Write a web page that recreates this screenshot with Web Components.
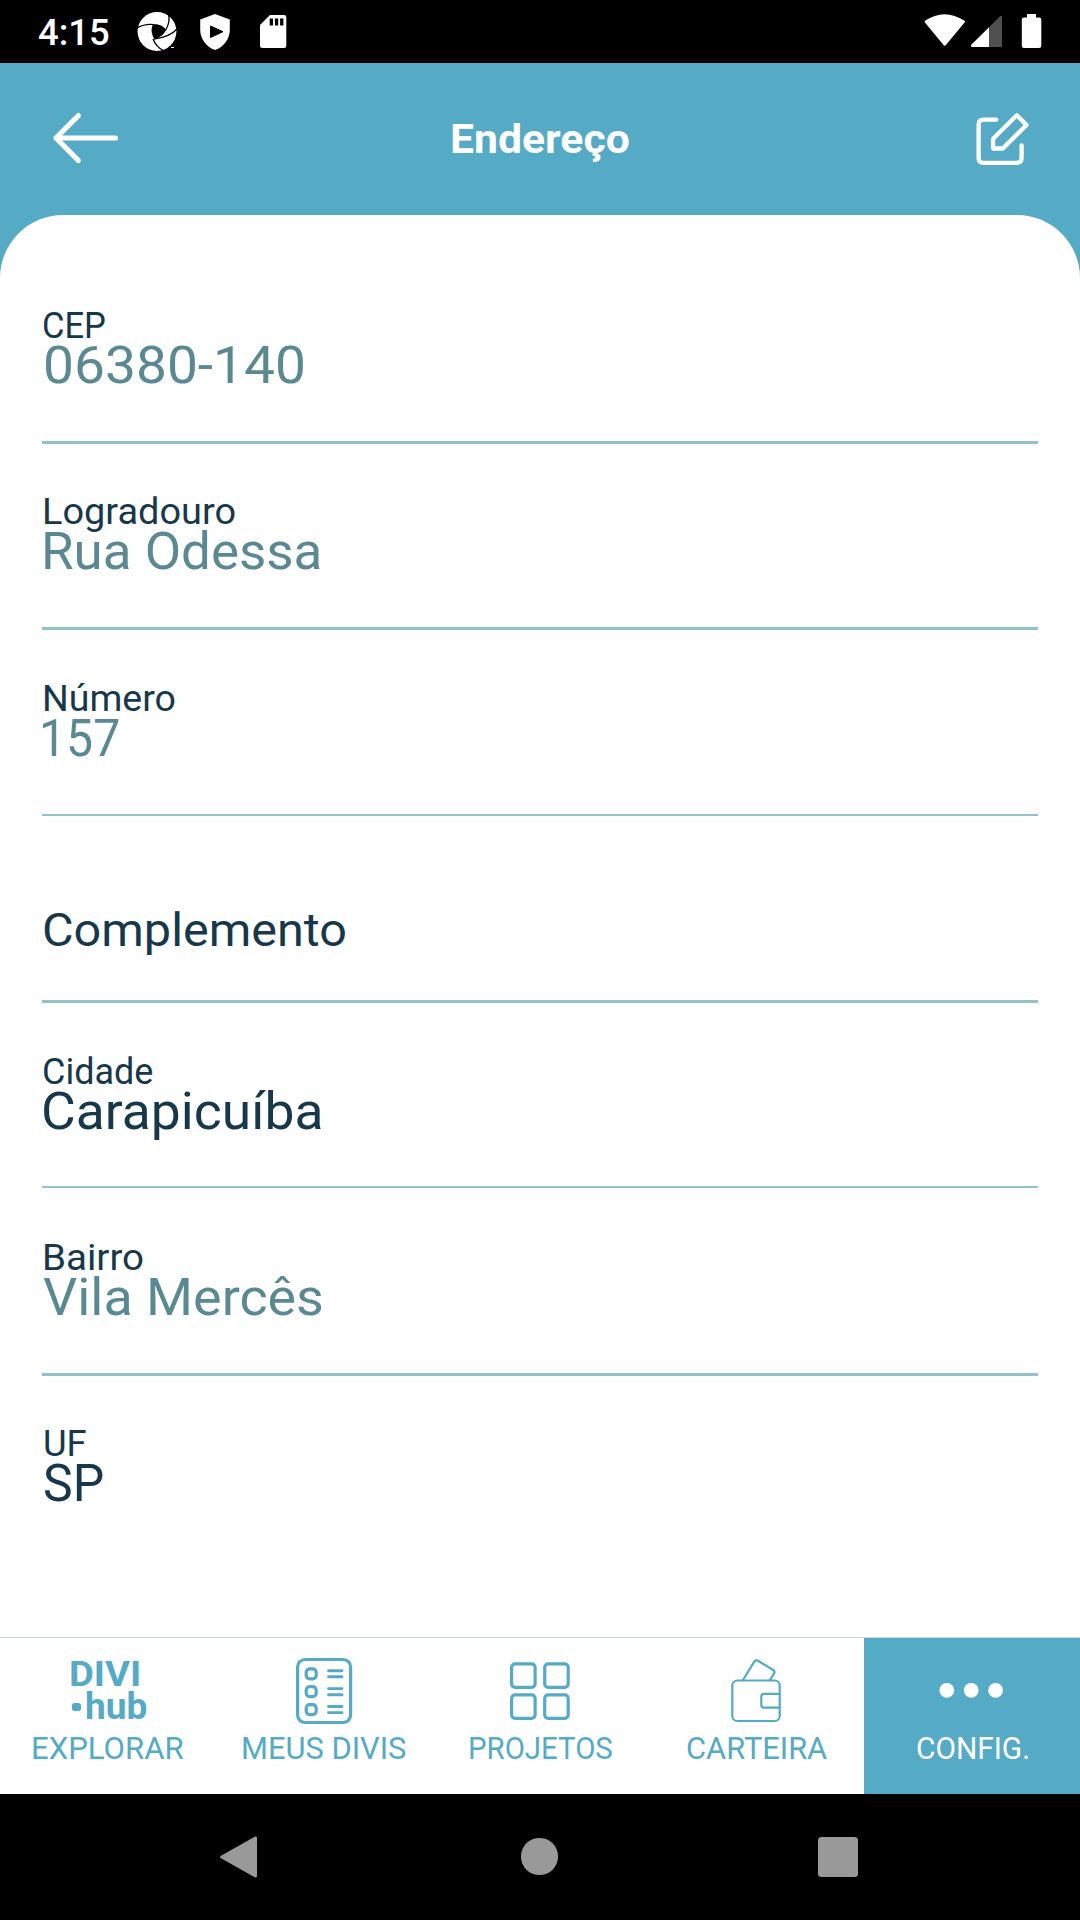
<!DOCTYPE html>
<html lang="pt-BR">
<head>
<meta charset="utf-8">
<title>Endereço</title>
<style>
html,body{margin:0;padding:0}
body{width:1080px;height:1920px;overflow:hidden;background:#fff;font-family:Roboto,sans-serif}
</style>
</head>
<body>
<address-screen></address-screen>
<script>
const define = (name, html, setup) => {
  const t = document.createElement('template');
  t.innerHTML = html;
  customElements.define(name, class extends HTMLElement {
    connectedCallback() {
      if (this.shadowRoot) return;
      const root = this.attachShadow({mode: 'open'});
      const c = t.content.cloneNode(true);
      if (setup) setup(this, c);
      root.append(c);
    }
  });
};

/* Single line of text whose ink starts at "inset" and spans "ink" pixels. */
const ctx = document.createElement('canvas').getContext('2d');
customElements.define('fit-text', class extends HTMLElement {
  connectedCallback() {
    if (this.shadowRoot) return;
    const a = n => parseFloat(this.getAttribute(n) || 0);
    const size = a('size'), line = a('line'), weight = a('weight') || 400, text = this.getAttribute('text');
    ctx.font = `${weight} ${size}px Roboto`;
    const m = ctx.measureText(text);
    const ink = m.actualBoundingBoxRight + m.actualBoundingBoxLeft;
    const scale = a('ink') / ink;
    const left = a('inset') + m.actualBoundingBoxLeft * scale;
    const root = this.attachShadow({mode: 'open'});
    root.innerHTML = `<style>:host{display:block;white-space:nowrap}
      span{display:block;width:max-content;font:${weight} ${size}px/${line}px Roboto,sans-serif;transform:scaleX(${scale.toFixed(4)});transform-origin:0 0;margin-left:${left.toFixed(2)}px}</style><span></span>`;
    root.querySelector('span').textContent = text;
  }
});

define('status-bar', `<style>
:host{display:flex;height:63px;background:#000;color:#fff;justify-content:space-between;flex:none}
.l{display:flex}.l fit-text{width:130px}svg{display:block;fill:#fff}
</style>
<div class="l"><fit-text text="4:15" size="36.5" line="66" weight="500" inset="37.500" ink="71"></fit-text>
<svg width="170" height="63" viewBox="130 0 170 63">
<circle cx="157" cy="31.5" r="19.4"/>
<path fill="#000" d="M153 24.5C158 23.5 164 26 166 30C163.5 35 160 37.5 154.5 39C151.500 35 150.500 29 153 24.500Z"/>
<path fill="none" stroke="#000" stroke-width="1.300" d="M137 28Q145 23.500 154 24.700M168.500 14Q170.500 22 165.500 30.500M177 29Q170 37 154 39M153 39Q156 47 164 51"/>
<path d="M171 47h3v1h-3z"/>
<path d="M215 14L229.800 19.500V30C229.800 39 223.500 47 215 50C206.500 47 200.200 39 200.200 30V19.500Z"/><path fill="#000" stroke="#000" stroke-linejoin="round" stroke-width="1" d="M210.500 26V37.500L223 31.700Z"/>
<path d="M270 15H284Q286.300 15 286.300 17.300V45.500Q286.300 48 284 48H262.500Q260 48 260 45.500V25Z"/>
<path fill="#000" d="M269.700 18.500h3.300v7h-3.300zM274.900 18.500h3.300v7h-3.300zM280.100 18.500h3.300v7h-3.300z"/></svg></div>
<svg width="170" height="63" viewBox="910 0 170 63">
<path stroke="#fff" stroke-linejoin="round" stroke-width="2" d="M925.500 21.700Q944.500 8.700 964 21.700L944.700 44.800Z"/>
<path fill="#505050" d="M1002 17.500Q1002 15.500 1000 16.300L989 27.300V47H1002Z"/><path d="M989 27.300L971.500 44.500Q970 47 972.500 47H989Z"/>
<path d="M1027 14h9v3.500h3Q1041.300 17.500 1041.300 19.500V45.700Q1041.300 48 1039 48h-15Q1021.800 48 1021.800 45.700V19.500Q1021.800 17.500 1024 17.500h3Z"/></svg>`);

define('app-header', `<style>
:host{display:flex;height:152px;background:#55aac5;color:#fff;flex:none}
svg{fill:none;stroke:#fff;stroke-linecap:round;stroke-linejoin:round}
.t{flex:1;padding-top:42px}
</style>
<svg width="200" height="152" viewBox="0 63 200 152" stroke-width="5.2"><path d="M115.500 138H56M78.300 115.600L56 138L78.300 160.400"/></svg>
<div class="t"><fit-text text="Endereço" size="40" line="70" weight="700" inset="252.500" ink="177"></fit-text></div>
<svg width="200" height="152" viewBox="880 63 200 152" stroke-width="4.300"><path d="M996.300 119.700H983.500Q978.600 119.700 978.600 124.600V158Q978.600 162.900 983.500 162.900H1016.500Q1021.600 162.900 1021.600 158V145.300"/><path d="M1016.800 115.200L1026.500 124.900L1002.800 148.500H993.100V138.800Z"/></svg>`);

define('form-field', `<style>
:host{display:block;box-sizing:border-box;height:var(--h);padding-top:var(--pad,50px);color:#17384a;border-bottom:var(--b,3px) solid #94c0ca}
:host([last]){border-bottom:0}
.v{color:var(--value,#17384a)}
</style>
<fit-text class="l" size="36.600" line="34"></fit-text><fit-text class="v" size="52" line="45" weight="430"></fit-text>`, (h, c) => {
  const g = n => h.getAttribute(n), l = c.querySelector('.l'), v = c.querySelector('.v');
  if (g('label')) { l.setAttribute('text', g('label')); l.setAttribute('inset', g('lx')); l.setAttribute('ink', g('lw')); }
  else l.remove();
  v.setAttribute('text', g('value')); v.setAttribute('inset', g('vx')); v.setAttribute('ink', g('vw'));
  if (g('size')) { v.setAttribute('size', g('size')); v.setAttribute('weight', 400); }
  if (h.hasAttribute('muted')) v.style.setProperty('--value', '#5a8992');
  h.style.setProperty('--h', g('h') + 'px');
  if (g('b')) h.style.setProperty('--b', g('b') + 'px');
  if (g('pad')) h.style.setProperty('--pad', g('pad') + 'px');
});

define('address-form', `<style>
:host{display:block;flex:1;background:linear-gradient(#55aac5 100px,#fff 100px);min-height:0}
.card{box-sizing:border-box;height:100%;background:#fff;border-radius:63px 63px 0 0;padding:42px 42px 0}
</style><div class="card"><slot></slot></div>`);

define('nav-item', `<style>
:host{display:flex;flex-direction:column;width:216px;height:156px;color:#55aac5}
:host([active]){background:#55aac5;color:#fff}
.i{height:92px}.i ::slotted(svg){display:block}
</style><div class="i"><slot></slot></div><fit-text size="31" line="38"></fit-text>`, (h, c) => {
  const t = c.querySelector('fit-text');
  for (const k of ['text', 'inset', 'ink']) t.setAttribute(k, h.getAttribute(k));
});

define('divi-logo', `<style>
:host{display:block;box-sizing:border-box;height:92px;padding-top:18px;color:#55aac5}
.r{display:flex;align-items:center;padding-left:72px}i{width:8.500px;height:8.500px;border-radius:2.800px;background:currentColor;margin-top:-1px}
</style><fit-text text="DIVI" size="35.400" line="36" weight="700" inset="71.500" ink="67.500"></fit-text>
<div class="r"><i></i><fit-text text="hub" size="36" line="31" weight="700" inset="5.500" ink="61"></fit-text></div>`);

define('tab-bar', `<style>:host{display:flex;border-top:1px solid #cbd8db;height:156px;flex:none;background:#fff}svg{display:block;fill:none;stroke:#55aac5;stroke-linecap:round;stroke-linejoin:round}</style>
<nav-item text="EXPLORAR" inset="33" ink="150.500"><divi-logo></divi-logo></nav-item>
<nav-item text="MEUS DIVIS" inset="27" ink="163"><svg width="216" height="92" viewBox="216 1638 216 92" stroke-width="3.200"><rect x="297.600" y="1659.500" width="53" height="63" rx="7.500"/><g><rect x="306.200" y="1668.800" width="10" height="10" rx="3.500"/><rect x="306.200" y="1686.700" width="10" height="10" rx="3.500"/><rect x="306.200" y="1704.600" width="10" height="10" rx="3.500"/></g><path stroke-width="2.900" d="M328.500 1670.700H342M328.500 1676.800H342M328.500 1688.600H342M328.500 1694.700H342M328.500 1706.500H342M328.500 1712.600H342"/></svg></nav-item>
<nav-item text="PROJETOS" inset="37.500" ink="142.500"><svg width="216" height="92" viewBox="432 1638 216 92" stroke-width="3.200"><rect x="511.600" y="1663.800" width="23.500" height="23.500" rx="3.500"/><rect x="544.700" y="1663.800" width="23.500" height="23.500" rx="3.500"/><rect x="511.600" y="1694.800" width="23.500" height="23.500" rx="3.500"/><rect x="544.700" y="1694.800" width="23.500" height="23.500" rx="3.500"/></svg></nav-item>
<nav-item text="CARTEIRA" inset="38.500" ink="140"><svg width="216" height="92" viewBox="648 1638 216 92" stroke-width="2.200"><rect x="732.300" y="1680.500" width="47.400" height="40.500" rx="5"/><path d="M743 1680L754.600 1661.200Q756 1659.600 758 1660.800L773.300 1670Q775.300 1671.500 774.300 1673.200L770 1680M779.500 1693.800H764Q761.300 1693.800 761.300 1696.500V1705Q761.300 1707.700 764 1707.700H779.500"/></svg></nav-item>
<nav-item active text="CONFIG." inset="53" ink="111"><svg width="216" height="92" viewBox="864 1638 216 92" style="fill:#fff;stroke:none"><circle cx="946.800" cy="1690.300" r="7.400"/><circle cx="971.200" cy="1690.300" r="7.400"/><circle cx="995.600" cy="1690.300" r="7.400"/></svg></nav-item>`);

define('system-nav', `<style>:host{display:flex;height:126px;background:#000;flex:none}svg{fill:#999}</style>
<svg width="1080" height="126" viewBox="0 1794 1080 126"><path stroke="#999" stroke-width="3" stroke-linejoin="round" d="M255.500 1838V1876L221.700 1857Z"/><circle cx="539.500" cy="1856.500" r="18.600"/><rect x="818" y="1837" width="40" height="40" rx="3.500"/></svg>`);

define('address-screen', `<style>:host{display:flex;flex-direction:column;width:1080px;height:1920px}</style>
<status-bar></status-bar><app-header></app-header>
<address-form>
<form-field h="187" label="CEP" value="06380-140" lx="2" lw="61" vx="3" vw="258.500" muted pad="52"></form-field>
<form-field h="186" label="Logradouro" value="Rua Odessa" lx="3" lw="190" vx="3.500" vw="275" muted pad="51"></form-field>
<form-field h="186" b="2" label="Número" value="157" lx="3" lw="130" vx="1" vw="75.500" muted pad="52"></form-field>
<form-field h="187" value="Complemento" vx="2.500" vw="301.500" size="46" pad="92"></form-field>
<form-field h="185" b="2" label="Cidade" value="Carapicuíba" lx="2" lw="109" vx="2.500" vw="277" pad="52"></form-field>
<form-field h="188" label="Bairro" value="Vila Mercês" lx="3" lw="98" vx="0.500" vw="279" muted pad="53"></form-field>
<form-field last h="187" label="UF" value="SP" lx="2.500" lw="41.500" vx="2.500" vw="57.500" pad="51"></form-field>
</address-form>
<tab-bar></tab-bar><system-nav></system-nav>`);
</script>
</body>
</html>
